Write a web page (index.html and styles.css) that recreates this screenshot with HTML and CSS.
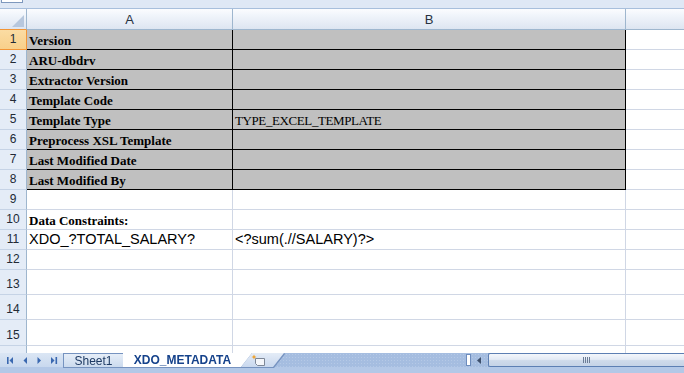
FILE: index.html
```html
<!DOCTYPE html>
<html lang="en">
<head>
    <meta charset="UTF-8">
    <title>XDO_METADATA</title>
    <link rel="stylesheet" href="styles.css">
</head>
<body>

<div class="formula-strip"><div class="formula-box"></div></div>

<div class="sheet">
    <div class="grid">
        <!-- column headers -->
        <div class="corner">
            <svg width="12" height="12" viewBox="0 0 12 12"><polygon points="12,0 12,12 0,12" fill="#b7c7dd"/></svg>
        </div>
        <div class="colhead">A</div>
        <div class="colhead">B</div>
        <div class="colhead"></div>

        <!-- metadata block -->
        <div class="rowhead selected">1</div>
        <div class="cell meta label">Version</div>
        <div class="cell meta"></div>
        <div class="cell"></div>

        <div class="rowhead">2</div>
        <div class="cell meta label">ARU-dbdrv</div>
        <div class="cell meta"></div>
        <div class="cell"></div>

        <div class="rowhead">3</div>
        <div class="cell meta label">Extractor Version</div>
        <div class="cell meta"></div>
        <div class="cell"></div>

        <div class="rowhead">4</div>
        <div class="cell meta label">Template Code</div>
        <div class="cell meta"></div>
        <div class="cell"></div>

        <div class="rowhead">5</div>
        <div class="cell meta label">Template Type</div>
        <div class="cell meta value">TYPE_EXCEL_TEMPLATE</div>
        <div class="cell"></div>

        <div class="rowhead">6</div>
        <div class="cell meta label">Preprocess XSL Template</div>
        <div class="cell meta"></div>
        <div class="cell"></div>

        <div class="rowhead">7</div>
        <div class="cell meta label">Last Modified Date</div>
        <div class="cell meta"></div>
        <div class="cell"></div>

        <div class="rowhead">8</div>
        <div class="cell meta label">Last Modified By</div>
        <div class="cell meta"></div>
        <div class="cell"></div>

        <div class="rowhead">9</div>
        <div class="cell"></div>
        <div class="cell"></div>
        <div class="cell"></div>

        <!-- constraints -->
        <div class="rowhead">10</div>
        <div class="cell label">Data Constraints:</div>
        <div class="cell"></div>
        <div class="cell"></div>

        <div class="rowhead">11</div>
        <div class="cell plain">XDO_?TOTAL_SALARY?</div>
        <div class="cell plain">&lt;?sum(.//SALARY)?&gt;</div>
        <div class="cell"></div>

        <div class="rowhead">12</div>
        <div class="cell"></div>
        <div class="cell"></div>
        <div class="cell"></div>

        <div class="rowhead">13</div>
        <div class="cell"></div>
        <div class="cell"></div>
        <div class="cell"></div>

        <div class="rowhead">14</div>
        <div class="cell"></div>
        <div class="cell"></div>
        <div class="cell"></div>

        <div class="rowhead">15</div>
        <div class="cell"></div>
        <div class="cell"></div>
        <div class="cell"></div>

        <div class="rowhead">16</div>
        <div class="cell"></div>
        <div class="cell"></div>
        <div class="cell"></div>
    </div>
</div>

<div class="tabbar">
    <div class="tabrow">
        <div class="nav">
            <svg width="63" height="14" viewBox="0 0 63 14">
                <g fill="#3a68b0">
                    <rect x="7" y="4" width="1.6" height="7"/>
                    <polygon points="13,4 13,11 9.5,7.5"/>
                    <polygon points="27,4 27,11 23.5,7.5"/>
                    <polygon points="37.5,4 37.5,11 41,7.5"/>
                    <polygon points="51,4 51,11 54.5,7.5"/>
                    <rect x="55.5" y="4" width="1.6" height="7"/>
                </g>
            </svg>
        </div>
        <div class="tabs">
            <div class="tab">Sheet1</div>
            <div class="tab active">XDO_METADATA</div>
            <div class="tab insert">
                <svg width="16" height="13" viewBox="0 0 16 13">
                    <path d="M4.5 4.5 H13.5 V11.5 H6.5 L4.5 9.5 Z" fill="#f4f6fa" stroke="#7d8797"/>
                    <path d="M3 0.5 L3.8 2.2 L5.5 3 L3.8 3.8 L3 5.5 L2.2 3.8 L0.5 3 L2.2 2.2 Z" fill="#f0a22e"/>
                </svg>
            </div>
        </div>
        <div class="filler"></div>
        <div class="hscroll">
            <span class="split"></span>
            <span class="arrow">
                <svg width="17" height="13" viewBox="0 0 17 13"><polygon points="10,3 10,10 6,6.5" fill="#3d4f6b"/></svg>
            </span>
            <div class="thumb"><span class="grip"></span></div>
        </div>
    </div>
    <div class="edge"></div>
</div>

</body>
</html>
```

FILE: styles.css
```css
body {
    margin: 0;
    width: 684px;
    height: 373px;
    overflow: hidden;
    background-color: #ffffff;
    font-family: "Liberation Sans", Arial, sans-serif;
}

/* cut-off formula bar at the top */
.formula-strip {
    height: 8px;
    background-color: #dfe8f5;
    border-bottom: 1px solid #a8bfdc;
    display: flex;
    align-items: flex-start;
}
.formula-box {
    width: 20px;
    height: 2px;
    margin-left: 1px;
    border: 1px solid #7e98bd;
    border-top: none;
    background-color: #ffffff;
}

/* sheet grid */
.sheet {
    height: 344px;
    overflow: hidden;
}
.grid {
    display: grid;
    grid-template-columns: 27px 206px 393px 100px;
    grid-template-rows: 21px repeat(12, 20px) 25px 25px 26px 25px;
    width: 726px;
}
.grid > div {
    box-sizing: border-box;
    border-right: 1px solid #d0d7e5;
    border-bottom: 1px solid #d0d7e5;
    display: flex;
    overflow: hidden;
    white-space: nowrap;
}

.corner,
.colhead {
    background: linear-gradient(to bottom, #fbfcfe 0%, #f1f5fb 30%, #e7edf6 65%, #dde5f1 100%);
}
.grid > .corner {
    border-right: 1px solid #9eb6ce;
    border-bottom: 1px solid #f29536;
    align-items: flex-end;
    justify-content: flex-end;
    padding: 0 2px 2px 0;
}
.grid > .colhead {
    border-right: 1px solid #9eb6ce;
    border-bottom: 1px solid #9eb6ce;
    align-items: center;
    justify-content: center;
    font-size: 13px;
    color: #27313f;
    padding-top: 1px;
}

.grid > .rowhead {
    background-color: #e4ecf7;
    border-right: 1px solid #9eb6ce;
    border-bottom: 1px solid #c5d3e6;
    align-items: flex-end;
    justify-content: center;
    font-size: 12px;
    line-height: 13px;
    padding-bottom: 3px;
    color: #222a35;
}
.grid > .rowhead.selected {
    background: linear-gradient(to bottom, #fbdca3, #f8d08a);
    border-right: 1px solid #f29536;
    border-bottom: 1px solid #f29536;
}

.cell {
    align-items: flex-end;
    padding: 0 2px 1px;
    color: #000000;
}
.grid > .cell.meta {
    background-color: #c0c0c0;
    border-right: 1px solid #000000;
    border-bottom: 1px solid #000000;
}
.label {
    font-family: "Liberation Serif", "Times New Roman", serif;
    font-weight: bold;
    font-size: 13px;
    line-height: 15px;
}
.value {
    font-family: "Liberation Serif", "Times New Roman", serif;
    font-size: 13px;
    line-height: 15px;
    letter-spacing: -0.4px;
}
.plain {
    font-size: 14.5px;
    line-height: 17px;
}

/* sheet tabs and scroll bar */
.tabbar {
    height: 20px;
    background-color: #a7bfe1;
}
.tabrow {
    display: flex;
    height: 14px;
    background-color: #a5bde0;
    background-image: radial-gradient(#b5c9e6 0.6px, transparent 0.8px);
    background-size: 3px 3px;
}
.edge {
    height: 6px;
    background-color: #b3c8e7;
}
.nav {
    width: 63px;
    background: linear-gradient(to bottom, #dbe6f4, #c8d8ee);
    display: flex;
}
.tabs {
    display: flex;
    filter: drop-shadow(1px 0 0 #7693c0) drop-shadow(0 1px 0 #7693c0);
}
.tab {
    box-sizing: border-box;
    height: 14px;
    display: flex;
    align-items: center;
    justify-content: center;
    font-size: 12px;
    color: #1e3a63;
}
.tab:first-child {
    width: 60px;
    border-top: 1px solid #7693c0;
    border-left: 1px solid #7693c0;
    background: linear-gradient(to bottom, #e6eef8, #cbdaee);
    padding-top: 1px;
}
.tab.active {
    width: 129px;
    background-color: #ffffff;
    font-weight: bold;
    color: #15428b;
    padding-right: 10px;
    clip-path: polygon(0 0, 100% 0, calc(100% - 11px) 100%, 0 100%);
}
.tab.insert {
    width: 43px;
    margin-left: -11px;
    background: linear-gradient(to bottom, #e4ecf7, #c9d8ee);
    clip-path: polygon(11px 0, 100% 0, calc(100% - 11px) 100%, 0 100%);
    justify-content: flex-start;
    padding-left: 10px;
}
.filler {
    flex: 1;
}
.hscroll {
    width: 218px;
    display: flex;
    align-items: center;
}
.split {
    box-sizing: border-box;
    width: 5px;
    height: 12px;
    background-color: #ffffff;
    border: 1px solid #6d8cbd;
}
.arrow {
    width: 17px;
    height: 13px;
    display: flex;
}
.thumb {
    flex: 1;
    box-sizing: border-box;
    height: 14px;
    border: 1px solid #5d7fb3;
    border-right: none;
    border-radius: 2px 0 0 2px;
    background: linear-gradient(to bottom, #f4f7fb 0%, #e3eaf5 45%, #cfdaea 55%, #c5d3e7 100%);
    display: flex;
    align-items: center;
    justify-content: center;
}
.grip {
    width: 7px;
    height: 6px;
    background: repeating-linear-gradient(to right, #6b7c95 0, #6b7c95 1px, transparent 1px, transparent 2px);
}
```
